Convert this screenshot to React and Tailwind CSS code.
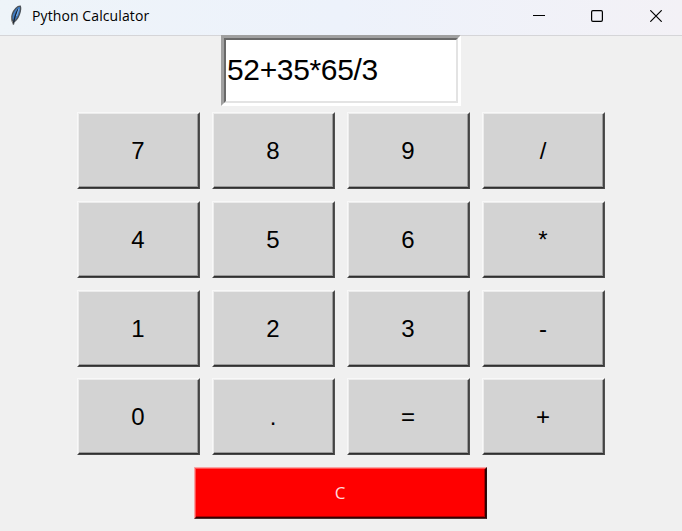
const rows = [
  ['7', '8', '9', '/'],
  ['4', '5', '6', '*'],
  ['1', '2', '3', '-'],
  ['0', '.', '=', '+'],
];

function Feather() {
  return (
    <svg className="mb-[5px]" width="14" height="22" viewBox="0 0 14 22" fill="none">
      <path d="M11.3 2.2C8.2 2.1 4.9 5.8 3.4 10C2.4 13 2.5 15.6 4.6 18C7.5 16.4 9.4 13.4 10.5 10C11.5 7 12.2 4.2 11.3 2.2Z" fill="#3f7cc4" stroke="#4d5359" strokeWidth="1.3" />
      <path d="M9.3 5C6.8 9 5.3 13.5 4.4 20.5" stroke="#1b2633" strokeWidth="1.4" />
      <path d="M9.8 5L7.6 12" stroke="#80b3ec" strokeWidth="1" />
      <path d="M2.6 12V16.5L4.5 20.5" stroke="#77736f" strokeWidth="1" />
    </svg>
  );
}

function TitleBar() {
  return (
    <header className="flex h-[35px] items-center bg-linear-to-r from-[#eef4f9] via-[#edf2fb] to-[#f3f1f6] pl-[9px]">
      <Feather />
      <h1 className="ml-[9px] flex-1 pb-[3px] font-['Open_Sans','Noto_Sans',sans-serif] text-[14px] leading-5 tracking-[0.1px] whitespace-nowrap text-black">
        Python Calculator
      </h1>
      <div className="mr-[-4px] flex pb-[3px] text-black">
        <button className="flex w-[58px] justify-center" aria-label="Minimize">
          <svg width="12" height="12" viewBox="0 0 12 12" stroke="currentColor"><path d="M0 5.5H12" /></svg>
        </button>
        <button className="flex w-[58px] justify-center" aria-label="Maximize">
          <svg width="12" height="12" viewBox="0 0 12 12" fill="none" stroke="currentColor"><rect x=".6" y=".6" width="10.8" height="10.8" rx="1.3" strokeWidth="1.2" /></svg>
        </button>
        <button className="flex w-[60px] justify-center" aria-label="Close">
          <svg width="12" height="12" viewBox="0 0 12 12" stroke="currentColor" strokeWidth="1.2"><path d="M.3 .3L11.7 11.7M11.7 .3L.3 11.7" /></svg>
        </button>
      </div>
    </header>
  );
}

function Key({ label }) {
  return (
    <button className="h-[77px] w-[123px] border border-t-[#f8f8f8] border-r-[#505050] border-b-[#484848] border-l-[#f8f8f8]">
      <span className="block h-full w-full border border-t-[#ececec] border-r-[#444444] border-b-[#303030] border-l-[#ececec]">
        <span className="flex h-full w-full items-center justify-center border-r border-b border-[#9b9b9b] bg-[#d3d3d3] pt-[2px] font-['Liberation_Sans',Arial,sans-serif] text-[24px] leading-none text-black">
          {label}
        </span>
      </span>
    </button>
  );
}

export default function App() {
  return (
    <div className="h-[531px] w-[682px] overflow-hidden bg-[#f0f0f0]">
      <TitleBar />
      <main className="flex flex-col items-center border-t border-[#d5d5d8]">
        <div className="-mt-px h-[71px] w-[240px] border-[3px] border-t-[#a0a0a0] border-r-white border-b-white border-l-[#a0a0a0]">
          <div className="flex h-full items-center border-2 border-t-[#696969] border-r-[#e3e3e3] border-b-[#e3e3e3] border-l-[#696969] bg-white pb-[2px] pl-px font-['Liberation_Sans',Arial,sans-serif] text-[30px] leading-none tracking-[-0.35px] text-black">
            52+35*65/3
          </div>
        </div>
        <div className="mt-[6px] grid grid-cols-4 gap-x-3 gap-y-[11.8px]">
          {rows.flat().map((label) => (
            <Key key={label} label={label} />
          ))}
        </div>
        <button className="mt-3 -ml-px h-[52px] w-[293px] border border-t-[#f9a5a5] border-r-[#251010] border-b-[#4a3030] border-l-[#f9a5a5]">
          <span className="block h-full w-full border border-t-[#ff5050] border-r-[#300000] border-b-[#380000] border-l-[#ff5050]">
            <span className="flex h-full w-full items-center justify-center border-r border-b border-[#b00000] bg-[#ff0000] font-['Open_Sans','Noto_Sans',sans-serif] text-[17px] leading-none text-[#ffdada]">
              C
            </span>
          </span>
        </button>
      </main>
    </div>
  );
}
